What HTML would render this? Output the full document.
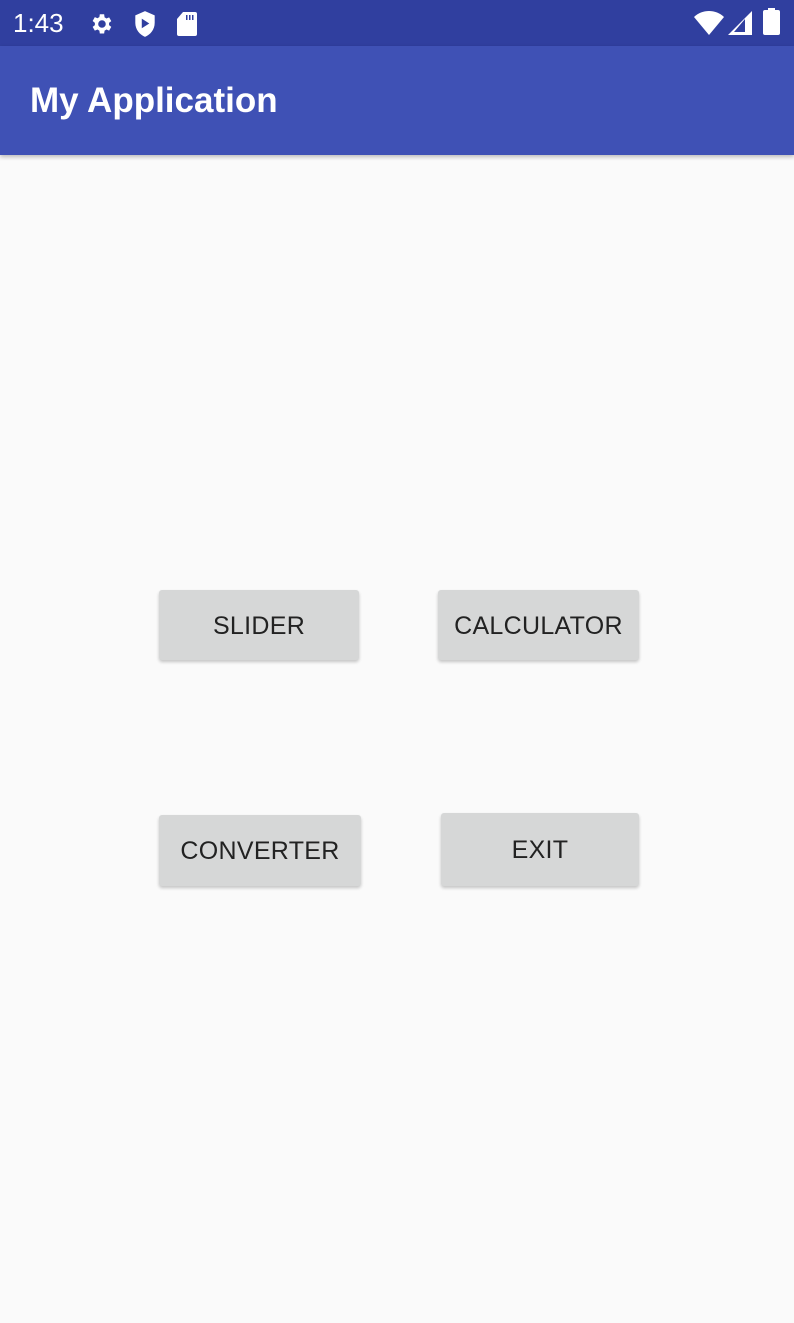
<!DOCTYPE html>
<html><head><meta charset="utf-8"><style>
body{margin:0;width:794px;height:1323px;background:#fafafa;font-family:"Liberation Sans",sans-serif;position:relative;overflow:hidden}
.sb{position:absolute;left:0;top:0;width:794px;height:46px;background:#303f9f;color:#fff}
.ab{position:absolute;left:0;top:46px;width:794px;height:109px;background:#3f51b5;box-shadow:0 2px 4px rgba(0,0,0,.25)}
.ab span{position:absolute;left:30px;top:35px;font-size:35px;font-weight:bold;color:#fff;letter-spacing:0px}
.b{position:absolute;background:#d6d7d7;border-radius:3px;box-shadow:0 2px 3px rgba(0,0,0,.22);display:flex;align-items:center;justify-content:center;font-size:25px;color:#222;letter-spacing:0.3px;padding-top:2px;box-sizing:border-box}
</style></head><body>
<div class="sb">
<span style="position:absolute;left:13px;top:8px;font-size:26px">1:43</span>
<svg style="position:absolute;left:88px;top:11px" width="26" height="26" viewBox="0 0 24 24"><path fill="#fff" d="M19.4 13a7.5 7.5 0 000-2l2.1-1.6-2-3.5-2.5 1a7.3 7.3 0 00-1.7-1L14.9 3h-4l-.4 2.7a7.3 7.3 0 00-1.7 1l-2.5-1-2 3.5L6.4 11a7.5 7.5 0 000 2l-2.1 1.6 2 3.5 2.5-1a7.3 7.3 0 001.7 1l.4 2.7h4l.4-2.7a7.3 7.3 0 001.7-1l2.5 1 2-3.5zM12.9 15.5a3.5 3.5 0 110-7 3.5 3.5 0 010 7z"/></svg>
<svg style="position:absolute;left:132px;top:10px" width="26" height="28" viewBox="0 0 24 26"><path fill="#fff" d="M12 1L3 5v7c0 6 4 11 9 13 5-2 9-7 9-13V5z"/><path fill="#303f9f" d="M9 8v9l7-4.5z"/></svg>
<svg style="position:absolute;left:176px;top:12px" width="22" height="24" viewBox="0 0 22 24"><path fill="#fff" d="M7 0h12a2 2 0 012 2v20a2 2 0 01-2 2H3a2 2 0 01-2-2V7z"/><path fill="#303f9f" d="M10 3h1.5v5H10zM13 3h1.5v5H13zM16 3h1.5v5H16z"/></svg>
<svg style="position:absolute;left:694px;top:11px" width="30" height="24" viewBox="0 0 30 24"><path fill="#fff" d="M0 6C8-2 22-2 30 6L15 24z"/></svg>
<svg style="position:absolute;left:728px;top:11px" width="24" height="24" viewBox="0 0 24 24"><path fill="#fff" d="M24 0v24H0z"/><path fill="#303f9f" d="M17 8v13H6z"/></svg>
<div style="position:absolute;left:763px;top:10px;width:17px;height:25px;background:#fff;border-radius:2px"></div>
<div style="position:absolute;left:768px;top:8px;width:7px;height:3px;background:#fff"></div>
</div>
<div class="ab"><span>My Application</span></div>
<div class="b" style="left:159px;top:590px;width:200px;height:70px">SLIDER</div>
<div class="b" style="left:438px;top:590px;width:201px;height:70px">CALCULATOR</div>
<div class="b" style="left:159px;top:815px;width:202px;height:71px">CONVERTER</div>
<div class="b" style="left:441px;top:813px;width:198px;height:73px">EXIT</div>
</body></html>
